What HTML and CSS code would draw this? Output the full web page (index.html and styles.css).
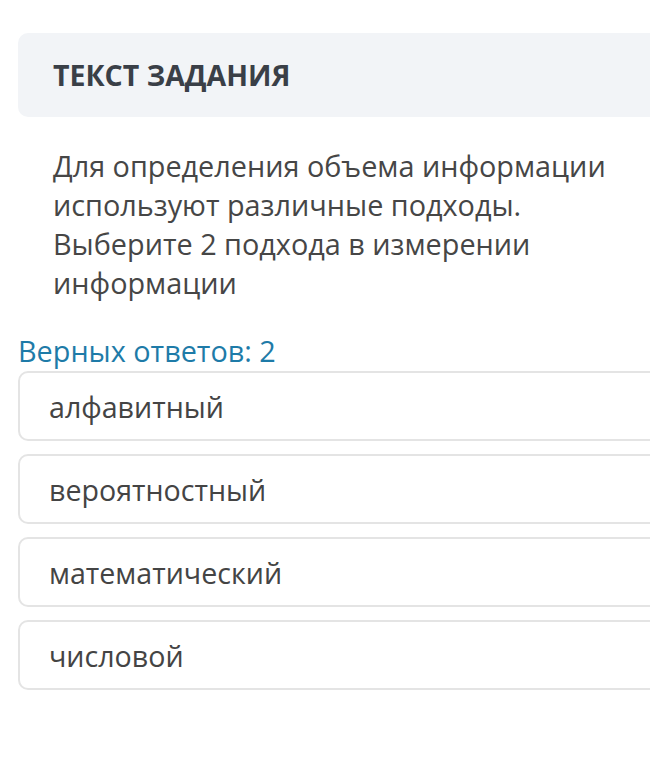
FILE: index.html
```html
<!DOCTYPE html>
<html lang="ru">
<head>
<meta charset="utf-8">
<link rel="stylesheet" href="styles.css">
</head>
<body>
<div class="page">
  <div class="task-head">ТЕКСТ ЗАДАНИЯ</div>
  <div class="task-text">Для определения объема информации используют различные подходы. Выберите 2 подхода в измерении информации</div>
  <div class="answers-count">Верных ответов: 2</div>
  <div class="options">
    <div class="option">алфавитный</div>
    <div class="option">вероятностный</div>
    <div class="option">математический</div>
    <div class="option">числовой</div>
  </div>
</div>
</body>
</html>
```
FILE: styles.css
```css
html, body {
  margin: 0;
  padding: 0;
  background: #ffffff;
  overflow: hidden;
}
.page {
  width: 700px;
  padding: 33px 0 0 18px;
  font-family: "Open Sans", "Noto Sans", sans-serif;
  color: #444444;
}
.task-head {
  background: #f2f4f7;
  border-radius: 10px;
  height: 84px;
  display: flex;
  align-items: center;
  padding-left: 35px;
  font-size: 28.5px;
  font-weight: 700;
  color: #3a3f47;
  box-sizing: border-box;
}
.task-text {
  width: 575px;
  padding: 29px 0 0 35px;
  font-size: 28.8px;
  line-height: 39px;
  color: #464646;
}
.answers-count {
  margin-top: 33px;
  font-size: 28.8px;
  line-height: 32px;
  color: #1e7ba8;
}
.options {
  display: flex;
  flex-direction: column;
  gap: 13px;
  margin-top: 4px;
}
.option {
  height: 70px;
  box-sizing: border-box;
  border: 2px solid #e4e4e4;
  border-radius: 10px;
  display: flex;
  align-items: center;
  padding-left: 29px;
  font-size: 28.6px;
  color: #444444;
}
```
